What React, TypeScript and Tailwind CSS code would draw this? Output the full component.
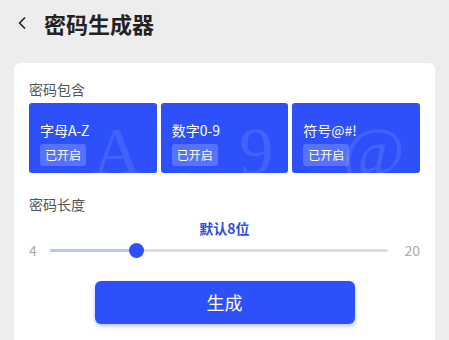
import { ChevronLeft } from "lucide-react";

const tiles = [
  { label: "字母A-Z", glyph: "A" },
  { label: "数字0-9", glyph: "9" },
  { label: "符号@#!", glyph: "@" },
];

export default function App() {
  return (
    <div
      className="h-[340px] w-[449px] overflow-hidden bg-[#ededed]"
      style={{ fontFamily: '"Noto Sans CJK SC", "Noto Sans", sans-serif' }}
    >
      <div className="flex h-[45px] items-center pl-[12px]">
        <ChevronLeft className="h-[20px] w-[20px] text-[#222]" strokeWidth={2} />
        <span className="ml-[12px] text-[22px] font-bold leading-none text-[#222]">密码生成器</span>
      </div>

      <div className="mx-[14px] mt-[18px] h-[300px] rounded-[6px] bg-white px-[15px] pt-[16px]">
        <div className="text-[14px] leading-[20px] text-[#555]">密码包含</div>
        <div className="mt-[4px] grid grid-cols-3 gap-[4px]">
          {tiles.map((t) => (
            <div
              key={t.label}
              className="relative h-[70px] overflow-hidden rounded-[3px] bg-[#2d50fb]"
            >
              <span
                className="absolute right-[15px] top-[14px] text-[68px] leading-none text-white/10"
                style={{ fontFamily: '"Liberation Serif", serif' }}
              >
                {t.glyph}
              </span>
              <div className="relative flex flex-col items-start pl-[11px] pt-[17px]">
                <div className="text-[14px] leading-[20px] text-white">{t.label}</div>
                <div className="mt-[4px] flex h-[22px] items-center rounded-[3px] bg-white/20 px-[5px] text-[12px] text-white">
                  已开启
                </div>
              </div>
            </div>
          ))}
        </div>

        <div className="mt-[21px] text-[14px] leading-[20px] text-[#555]">密码长度</div>
        <div className="mt-[4px] text-center text-[14px] font-bold leading-[20px] text-[#2d50dc]">
          默认8位
        </div>
        <div className="mt-[2px] flex items-center">
          <span className="w-[21px] text-[14px] text-[#aaa]">4</span>
          <div className="relative h-[3px] flex-1 rounded-full bg-[#dddddd]">
            <div className="absolute left-0 top-0 h-[3px] w-[86px] rounded-full bg-[#b8c4fc]" />
            <div className="absolute left-[79px] top-[-6px] h-[15px] w-[15px] rounded-full bg-[#2d50fb]" />
          </div>
          <span className="w-[32px] text-right text-[14px] text-[#aaa]">20</span>
        </div>

        <div className="mt-[20px] flex justify-center">
          <button className="h-[43px] w-[260px] rounded-[6px] bg-[#2d50fb] text-[18px] text-white shadow-[0_2px_4px_rgba(45,80,251,0.35)]">
            生成
          </button>
        </div>
      </div>
    </div>
  );
}
